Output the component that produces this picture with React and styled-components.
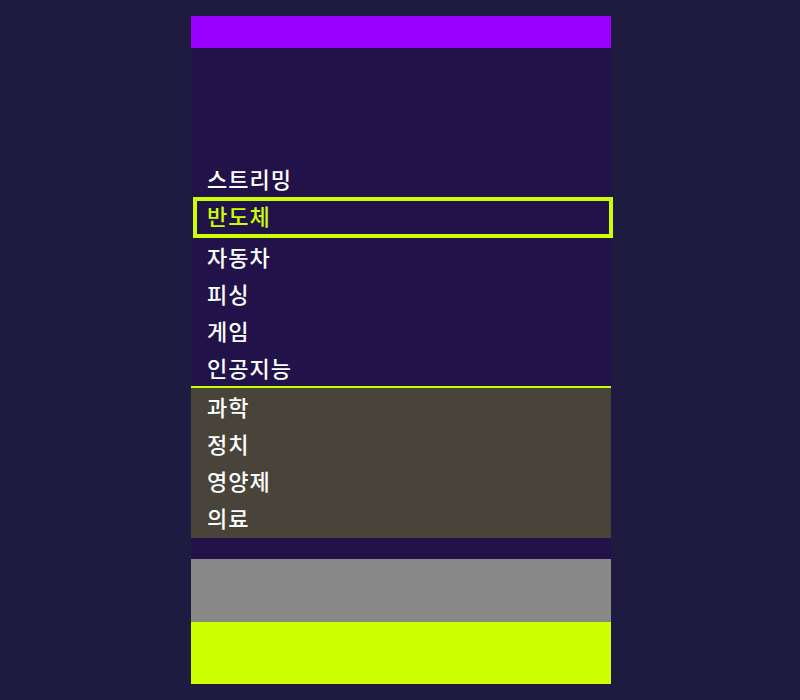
import React from 'react';
import styled, { createGlobalStyle } from 'styled-components';

const GlobalStyle = createGlobalStyle`
  html, body {
    margin: 0;
    padding: 0;
    background: #1f1a3f;
  }
  body {
    font-family: "Noto Sans CJK KR", "Noto Sans", sans-serif;
  }
`;

const Page = styled.div`
  width: 800px;
  height: 700px;
  padding-top: 16px;
  box-sizing: border-box;
  display: flex;
  justify-content: center;
  padding-left: 2px;
`;

const Panel = styled.div`
  width: 420px;
  display: flex;
  flex-direction: column;
  background: #21134a;
  align-self: flex-start;
`;

const TopBar = styled.div`
  height: 32px;
  background: #9900ff;
`;

const Spacer = styled.div`
  height: ${(p) => p.h}px;
`;

const List = styled.div`
  display: flex;
  flex-direction: column;
`;

const Row = styled.div`
  height: 37px;
  display: flex;
  align-items: center;
  padding: 0 16px;
  color: #ffffff;
  font-size: 22px;
  font-weight: 500;
  letter-spacing: 1px;
  line-height: 25px;
  box-sizing: border-box;
`;

const SelectedRow = styled(Row)`
  height: 41px;
  margin: 0 -2px 0 2px;
  border: 4px solid #ccff00;
  padding: 2px 10px 6px;
  color: #ccff00;
`;

const Divider = styled.div`
  height: 2px;
  background: #ccff00;
`;

const MutedSection = styled.div`
  background: #48443a;
  display: flex;
  flex-direction: column;
  padding-bottom: 2px;
`;

const Block = styled.div`
  height: ${(p) => p.h}px;
  background: ${(p) => p.color};
`;

const primary = ['스트리밍', '반도체', '자동차', '피싱', '게임', '인공지능'];
const secondary = ['과학', '정치', '영양제', '의료'];

export default function App() {
  const selected = '반도체';
  return (
    <>
      <GlobalStyle />
      <Page>
        <Panel>
          <TopBar />
          <Spacer h={112} />
          <List>
            {primary.map((name) =>
              name === selected ? (
                <SelectedRow key={name}>{name}</SelectedRow>
              ) : (
                <Row key={name}>{name}</Row>
              )
            )}
          </List>
          <Divider />
          <MutedSection>
            {secondary.map((name) => (
              <Row key={name}>{name}</Row>
            ))}
          </MutedSection>
          <Spacer h={21} />
          <Block h={63} color="#888888" />
          <Block h={62} color="#ccff00" />
        </Panel>
      </Page>
    </>
  );
}
